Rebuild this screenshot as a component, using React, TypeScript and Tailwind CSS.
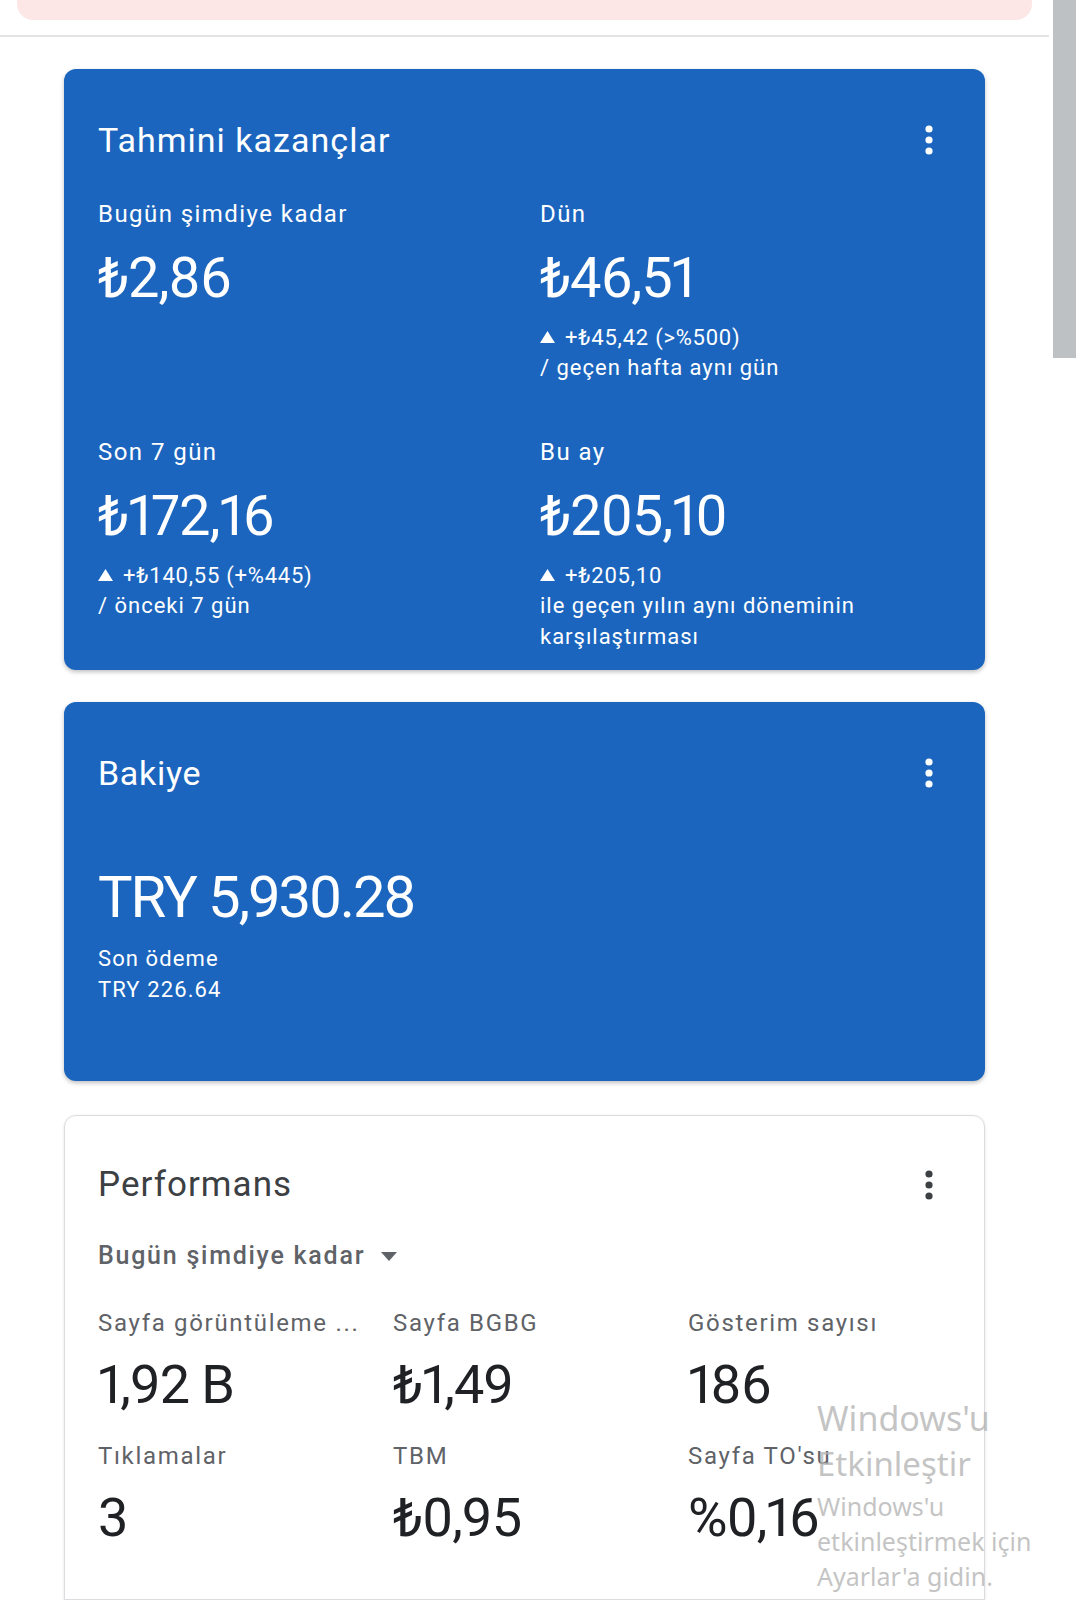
import React from 'react';

const KebabIcon: React.FC<{ color: string }> = ({ color }) => (
  <svg width="12" height="32" viewBox="0 0 12 32" aria-hidden="true">
    <circle cx="6" cy="5" r="3.6" fill={color} />
    <circle cx="6" cy="16" r="3.6" fill={color} />
    <circle cx="6" cy="27" r="3.6" fill={color} />
  </svg>
);

interface StatProps {
  label: string;
  value: string;
  delta?: string;
  lines?: string[];
}

const EarningStat: React.FC<StatProps> = ({ label, value, delta, lines = [] }) => (
  <div className="flex flex-col">
    <div className="text-[24px] leading-[32px] tracking-[0.06em]">{label}</div>
    <div className="mt-[16px] text-[56px] leading-[64px] tracking-[-0.02em] proportional-nums">{value}</div>
    {delta && (
      <div className="mt-[12px] flex h-[30px] items-center text-[22px] tracking-[0.035em]">
        <svg width="15" height="12" viewBox="0 0 15 12" className="mr-[10px]" aria-hidden="true">
          <path d="M7.5 0 L15 12 L0 12 Z" fill="#ffffff" />
        </svg>
        {delta}
      </div>
    )}
    {lines.map((l) => (
      <div key={l} className="text-[22px] leading-[31px] tracking-[0.045em]">
        {l}
      </div>
    ))}
  </div>
);

const Metric: React.FC<{ label: string; value: string }> = ({ label, value }) => (
  <div className="flex flex-col">
    <div className="whitespace-nowrap text-[24px] leading-[32px] tracking-[0.07em] text-[#5f6368]">{label}</div>
    <div className="mt-[14px] text-[54px] leading-[64px] tracking-[-0.02em] text-[#202124] proportional-nums">
      {value}
    </div>
  </div>
);

export default function App() {
  return (
    <div className="relative flex h-[1600px] w-[1080px] overflow-hidden bg-white font-['Roboto',sans-serif]">
      {/* main column */}
      <div className="flex w-[1049px] flex-col">
        <div className="mx-[17px] h-[20px] rounded-b-[16px] bg-[#fde6e6]" />
        <div className="mt-[15px] h-[2px] bg-[#e3e3e3]" />

        {/* Tahmini kazançlar */}
        <div className="mx-[64px] mt-[32px] rounded-[12px] bg-[#1b65be] px-[34px] pb-[18px] pt-[51px] text-white shadow-[0_2px_4px_rgba(0,0,0,0.25)]">
          <div className="flex items-center justify-between">
            <div className="text-[34px] leading-[40px] tracking-[0.03em]">Tahmini kazançlar</div>
            <div className="mr-[16px]">
              <KebabIcon color="#ffffff" />
            </div>
          </div>
          <div className="mt-[38px] grid grid-cols-[442px_1fr] gap-y-[53px]">
            <EarningStat label="Bugün şimdiye kadar" value="₺2,86" />
            <EarningStat
              label="Dün"
              value="₺46,51"
              delta="+₺45,42 (>%500)"
              lines={['/ geçen hafta aynı gün']}
            />
            <EarningStat
              label="Son 7 gün"
              value="₺172,16"
              delta="+₺140,55 (+%445)"
              lines={['/ önceki 7 gün']}
            />
            <EarningStat
              label="Bu ay"
              value="₺205,10"
              delta="+₺205,10"
              lines={['ile geçen yılın aynı döneminin', 'karşılaştırması']}
            />
          </div>
        </div>

        {/* Bakiye */}
        <div className="mx-[64px] mt-[32px] rounded-[12px] bg-[#1b65be] px-[34px] pb-[76px] pt-[51px] text-white shadow-[0_2px_4px_rgba(0,0,0,0.25)]">
          <div className="flex items-center justify-between">
            <div className="text-[34px] leading-[40px] tracking-[0.02em]">Bakiye</div>
            <div className="mr-[16px]">
              <KebabIcon color="#ffffff" />
            </div>
          </div>
          <div className="mt-[70px] text-[58px] leading-[68px] tracking-[-0.035em]">TRY 5,930.28</div>
          <div className="mt-[12px] text-[22px] leading-[31px] tracking-[0.05em]">Son ödeme</div>
          <div className="text-[22px] leading-[31px] tracking-[0.05em]">TRY 226.64</div>
        </div>

        {/* Performans */}
        <div className="mx-[64px] mt-[34px] flex-1 rounded-t-[12px] border border-[#dadce0] bg-white px-[33px] pt-[49px] shadow-[0_1px_3px_rgba(0,0,0,0.12)]">
          <div className="flex items-center justify-between">
            <div className="text-[35px] leading-[40px] tracking-[0.03em] text-[#3c4043]">Performans</div>
            <div className="mr-[16px]">
              <KebabIcon color="#3c4043" />
            </div>
          </div>
          <div className="mt-[35px] flex items-center text-[25px] font-medium leading-[32px] tracking-[0.07em] text-[#5f6368]">
            Bugün şimdiye kadar
            <svg width="16" height="9" viewBox="0 0 16 9" className="ml-[16px]" aria-hidden="true">
              <path d="M0 0 L16 0 L8 9 Z" fill="#5f6368" />
            </svg>
          </div>
          <div className="mt-[35px] grid grid-cols-[295px_295px_1fr] gap-y-[23px]">
            <Metric label="Sayfa görüntüleme ..." value="1,92 B" />
            <Metric label="Sayfa BGBG" value="₺1,49" />
            <Metric label="Gösterim sayısı" value="186" />
            <Metric label="Tıklamalar" value="3" />
            <Metric label="TBM" value="₺0,95" />
            <Metric label="Sayfa TO'su" value="%0,16" />
          </div>
        </div>
      </div>

      {/* scrollbar */}
      <div className="flex-1 pl-[4px]">
        <div className="h-[358px] w-[23px] bg-[#bdc1c4]" />
      </div>

      {/* activation watermark */}
      <div className="pointer-events-none absolute left-[817px] top-[1395px] font-['Noto_Sans',sans-serif] text-[#b4b4b4]/80">
        <div className="text-[34px] leading-[46px]">Windows'u</div>
        <div className="text-[33px] leading-[46px]">Etkinleştir</div>
        <div className="mt-[2px] text-[25px] leading-[35px]">Windows'u</div>
        <div className="text-[25px] leading-[35px]">etkinleştirmek için</div>
        <div className="text-[25px] leading-[35px]">Ayarlar'a gidin.</div>
      </div>
    </div>
  );
}
